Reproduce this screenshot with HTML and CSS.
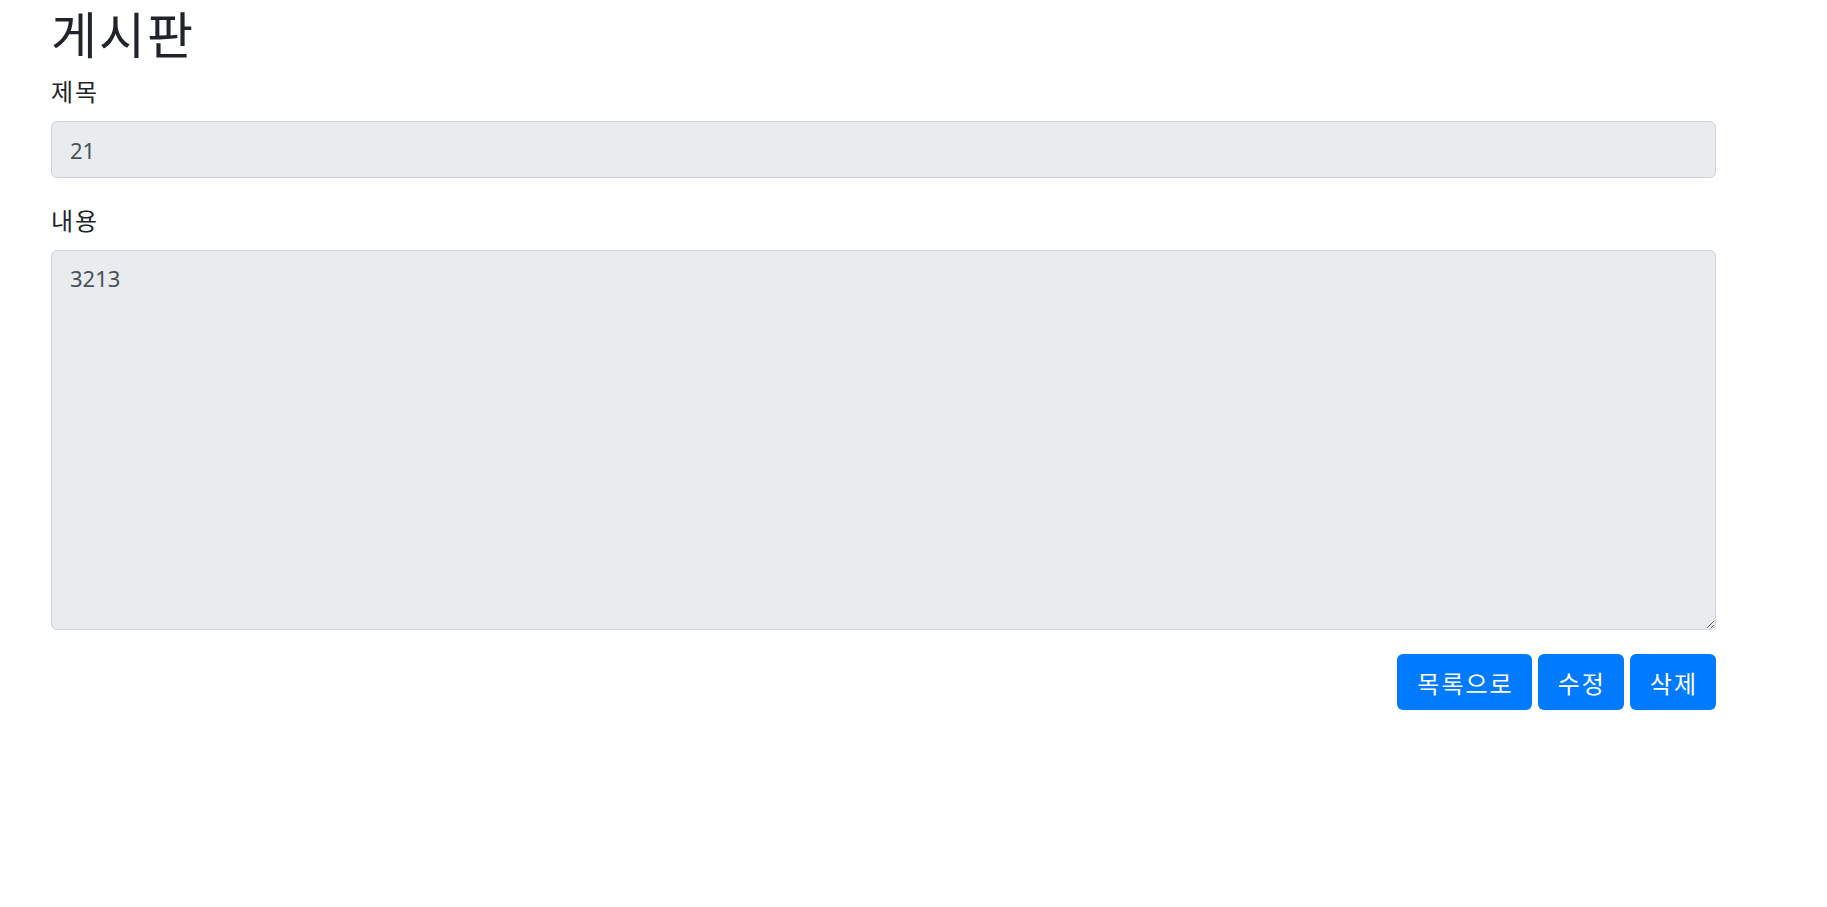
FILE: index.html
```html
<!DOCTYPE html>
<html lang="ko">

<head>
    <meta charset="UTF-8">
    <meta name="viewport" content="width=device-width, initial-scale=1.0">
    <title>게시판</title>
    <link rel="stylesheet" href="styles.css">
</head>

<body>
    <div class="container">
        <h1>게시판</h1>
        <form id="board-form">
            <div class="form-group">
                <label for="title">제목</label>
                <input type="text" id="title" class="form-control" value="21" readonly>
            </div>
            <div class="form-group">
                <label for="content">내용</label>
                <textarea id="content" class="form-control" rows="10" readonly>3213</textarea>
            </div>
            <div class="btn-row">
                <button type="button" class="btn">목록으로</button>
                <button type="button" class="btn">수정</button>
                <button type="button" class="btn">삭제</button>
            </div>
        </form>
    </div>
</body>

</html>
```

FILE: styles.css
```css
body {
    font-family: "Noto Sans", "Noto Sans CJK KR", sans-serif;
    margin: 0;
    color: #212529;
    background-color: #fff;
}

.container {
    width: 1665px;
    padding-left: 51px;
}

h1 {
    font-family: "Noto Sans CJK KR", sans-serif;
    font-size: 50px;
    font-weight: 400;
    letter-spacing: 2px;
    line-height: 64px;
    margin: 0 0 9px 0;
}

.form-group {
    margin-bottom: 24px;
}

label {
    display: block;
    font-family: "Noto Sans CJK KR", sans-serif;
    font-size: 24px;
    letter-spacing: 2px;
    line-height: 36px;
    margin-bottom: 12px;
}

.form-control {
    display: block;
    width: 100%;
    box-sizing: border-box;
    height: 57px;
    padding: 9px 18px;
    font-family: "Noto Sans", "Noto Sans CJK KR", sans-serif;
    font-size: 22px;
    line-height: 36px;
    color: #495057;
    background-color: #e9ecef;
    border: 1.5px solid #ced4da;
    border-radius: 6px;
    outline: none;
}

textarea.form-control {
    height: 380px;
    resize: vertical;
}

.btn-row {
    display: flex;
    justify-content: flex-end;
    gap: 6px;
}

.btn {
    height: 56px;
    padding: 0 18px 0 20px;
    font-family: "Noto Sans CJK KR", sans-serif;
    font-size: 24px;
    letter-spacing: 2px;
    color: #fff;
    background-color: #007bff;
    border: none;
    border-radius: 6px;
    cursor: pointer;
}

.btn:hover {
    background-color: #0069d9;
}
```
